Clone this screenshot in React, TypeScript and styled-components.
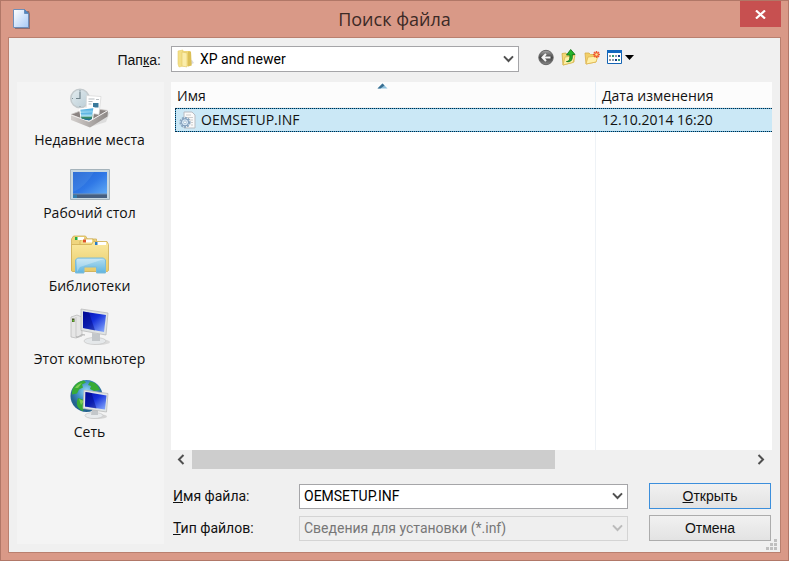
import React from "react";
import styled, { createGlobalStyle, css } from "styled-components";

const uiFont = `"Open Sans", "Noto Sans", sans-serif`;
const dialogFont = `"Liberation Sans", Arial, sans-serif`;
const fieldFont = `Roboto, "Liberation Sans", sans-serif`;

const GlobalStyle = createGlobalStyle`
  *, *::before, *::after { box-sizing: border-box; }
  body { margin: 0; background: #d99987; }
  button, input, select { font: inherit; color: inherit; margin: 0; }
`;

const Window = styled.main`
  min-height: 100vh;
  display: flex;
  flex-direction: column;
  padding: 0 7px 7px;
  border: 1px solid #b17767;
  background: #d99987;
  color: #111;
  font: 14px/20px ${uiFont};
`;

const TitleBar = styled.header`
  display: grid;
  grid-template-columns: 48px 1fr 48px;
  align-items: start;
  height: 36px;
`;

const TitleIcon = styled.svg`
  width: 20px;
  height: 22px;
  margin: 7px 0 0 4px;
`;

const Title = styled.h1`
  margin: 0;
  font-size: 18px;
  font-weight: 400;
  line-height: 36px;
  text-align: center;
  color: #3c2a26;
`;

const CloseButton = styled.button`
  justify-self: end;
  display: flex;
  align-items: center;
  justify-content: center;
  width: 41px;
  height: 26px;
  padding: 0;
  border: 0;
  background: #c75050;
`;

const Client = styled.form`
  flex: 1;
  display: grid;
  grid-template-columns: 147px minmax(0, 1fr);
  grid-template-rows: 44px 1fr;
  column-gap: 7px;
  padding: 0 8px 8px;
  border: 1px solid #b9806f;
  background: #f0f0f0;
`;

const FolderLabel = styled.label`
  justify-self: end;
  padding: 12px 3px 0 0;
  font-family: ${dialogFont};
`;

const FolderBar = styled.div`
  display: flex;
  align-items: center;
  padding-bottom: 2px;
`;

const Combo = styled.div<{ $folder?: boolean; $disabled?: boolean }>`
  position: relative;
  display: flex;
  align-items: center;
  height: 26px;
  border: 1px solid ${(p) => (p.$disabled ? "#d4d4d4" : "#a5a5a8")};
  background: ${(p) => (p.$disabled ? "#efefef" : "#fff")};
  color: ${(p) => (p.$disabled ? "#777" : "#000")};
  font-family: ${fieldFont};
  ${(p) =>
    p.$folder &&
    css`
      flex: 0 1 348px;
      padding-left: 4px;
    `}
`;

const field = css`
  flex: 1;
  min-width: 0;
  align-self: stretch;
  padding: 0 24px 0 4px;
  border: 0;
  outline: 0;
  background: transparent;
  opacity: 1;
`;

const Select = styled.select`
  ${field}
  appearance: none;
  color: inherit;
`;

const TextInput = styled.input`
  ${field}
`;

const ComboArrow = styled.span<{ $disabled?: boolean }>`
  position: absolute;
  right: 4px;
  top: 0;
  bottom: 0;
  display: flex;
  align-items: center;
  pointer-events: none;
  color: ${(p) => (p.$disabled ? "#bbb" : "#505050")};
`;

const Tools = styled.div`
  display: flex;
  align-items: center;
  gap: 3px;
  margin: 0 0 4px 17px;
`;

const ToolButton = styled.button<{ $wide?: boolean }>`
  flex: none;
  width: ${(p) => (p.$wide ? 32 : 20)}px;
  height: 20px;
  padding: 0;
  border: 0;
  background: transparent;
  svg { display: block; }
`;

const Places = styled.nav`
  display: flex;
  flex-direction: column;
  padding: 4px 2px 0 0;
  background: #f4f4f4;
`;

const Place = styled.button`
  display: flex;
  flex-direction: column;
  align-items: center;
  height: 73px;
  padding: 0;
  border: 0;
  background: transparent;
  white-space: nowrap;
  svg { flex: none; }
`;

const Content = styled.section`
  display: flex;
  flex-direction: column;
  min-width: 0;
`;

const FileList = styled.div`
  flex: 1;
  display: flex;
  padding-left: 4px;
  background: linear-gradient(#fcfcfc 25px, #fff 25px);
`;

const Table = styled.table`
  width: 100%;
  border-spacing: 0;
  table-layout: fixed;
`;

const HeadCell = styled.th<{ $date?: boolean }>`
  position: relative;
  width: ${(p) => (p.$date ? "177px" : "auto")};
  height: 26px;
  padding: 2px 0 0 ${(p) => (p.$date ? 6 : 2)}px;
  border-left: ${(p) => (p.$date ? "1px solid #e3edf5" : "0")};
  border-bottom: 1px solid #f2f2f2;
  background: #fcfcfc;
  font-weight: 400;
  text-align: left;
`;

const SortMark = styled.svg`
  position: absolute;
  top: 1px;
  left: calc(50% - 8px);
`;

const Cell = styled.td<{ $first?: boolean }>`
  height: 24px;
  padding: 0 0 0 ${(p) => (p.$first ? 3 : 7)}px;
  border: 1px dotted #062a44;
  border-width: 1px 0 1px ${(p) => (p.$first ? "1px" : "0")};
  background:
    linear-gradient(#cbe8f6, #cbe8f6) padding-box,
    linear-gradient(#4fa9d6, #4fa9d6) border-box;
`;

const FileName = styled.div`
  display: flex;
  align-items: center;
  gap: 5px;
`;

const RestCell = styled.td<{ $date?: boolean }>`
  padding: 0;
  border-left: ${(p) => (p.$date ? "1px solid #eef2f6" : "0")};
`;

const ScrollBar = styled.div`
  display: grid;
  grid-template-columns: 21px minmax(0, 1fr) 21px;
  height: 19px;
`;

const ScrollButton = styled.button`
  display: flex;
  align-items: center;
  justify-content: center;
  padding: 0 2px 0 0;
  border: 0;
  background: transparent;
`;

const ScrollThumb = styled.div`
  width: 65%;
  background: #cdcdcd;
`;

const Fields = styled.div`
  display: grid;
  grid-template-columns: 128px minmax(0, 1fr) 122px;
  column-gap: 0;
  row-gap: 6px;
  align-items: center;
  padding: 14px 1px 3px 0;
  font-family: ${dialogFont};
  label { padding-left: 2px; font-family: ${fieldFont}; }
  ${Combo} { margin-right: 21px; height: 25px; }
`;

const PushButton = styled.button<{ $default?: boolean }>`
  height: 26px;
  padding: 0;
  border: 1px solid ${(p) => (p.$default ? "#3c8fdc" : "#acacac")};
  background: linear-gradient(#f1f1f1, #e3e3e3);
`;

const Grip = styled.svg`
  position: fixed;
  right: 12px;
  bottom: 11px;
`;

const Chevron = () => (
  <svg width="11" height="8" viewBox="0 0 11 8" aria-hidden="true">
    <path d="M1 1.4 5.5 6 10 1.4" fill="none" stroke="currentColor" strokeWidth="2" />
  </svg>
);

const FolderIcon = () => (
  <svg width="20" height="20" viewBox="0 0 20 20" aria-hidden="true">
    <path d="M11 17l7-3-2-3-4 1z" fill="#999" opacity=".35" />
    <path d="M2 2l5-1v16l-4 1-1-3z" fill="#f3df87" stroke="#e6cc68" strokeWidth=".6" />
    <path d="M7 2h7v15l-7 .5z" fill="#efd778" />
    <path d="M6 3l5 1v14l-5-1z" fill="#fbedaa" stroke="#dcc05c" strokeWidth=".5" />
    <path d="M12 2.5h3l.7 14-3.7 1z" fill="#dcc057" />
  </svg>
);

const InfIcon = () => (
  <svg width="17" height="18" viewBox="0 0 17 18" aria-hidden="true">
    <path d="M5 1h8l3 3v13H5z" fill="#fafafa" stroke="#b8bcc2" />
    <path d="M7 4h5M7 6.5h7M10 9h4M12 11.5h2M12 14h2" stroke="#ccc" />
    <circle cx="6" cy="11.3" r="4.6" fill="#dceaf5" stroke="#8ba7c1" strokeWidth="2" strokeDasharray="2 1" />
    <circle cx="6" cy="11.3" r="3.6" fill="#d7e8f5" stroke="#7896b5" />
    <circle cx="6" cy="11.3" r="1.4" fill="#fff" stroke="#8ba7c1" strokeWidth=".6" />
  </svg>
);

const BackIcon = () => (
  <svg width="20" height="20" viewBox="0 0 20 20" aria-hidden="true">
    <defs>
      <linearGradient id="back" x2="0" y2="1"><stop stopColor="#aaa" /><stop offset=".5" stopColor="#444" /><stop offset="1" stopColor="#888" /></linearGradient>
    </defs>
    <circle cx="10" cy="10.5" r="7.2" fill="url(#back)" stroke="#666" />
    <path d="M14.5 10.5H6.5M10 7l-3.5 3.5L10 14" fill="none" stroke="#f5f5f5" strokeWidth="2" />
  </svg>
);

const UpIcon = () => (
  <svg width="20" height="20" viewBox="0 0 20 20" aria-hidden="true">
    <path d="M3 6.5l4-.5 1 1.5h7V15L4 18z" fill="#f3d774" stroke="#d1ac45" strokeWidth=".8" />
    <path d="M4 18l2-8 10-1.5-2 7z" fill="#fdf0a8" stroke="#d9b94f" strokeWidth=".8" />
    <path d="M7.5 14.5c3-.3 3.5-2 3.4-6.500H7.500L11.700 2.500 16 7.500h-2.700c.3 5-.8 8-5.800 7z" fill="#25b52b" stroke="#14751b" strokeWidth=".9" />
  </svg>
);

const NewFolderIcon = () => (
  <svg width="20" height="20" viewBox="0 0 20 20" aria-hidden="true">
    <path d="M3 6h4l1.500 1.500H14V15L4 17z" fill="#f2cf69" stroke="#d8ad49" strokeWidth=".8" />
    <path d="M4 17l2-7 10-1-2 6z" fill="#fff0a9" stroke="#dfb650" strokeWidth=".8" />
    <path d="M14.500 4v7M11 7.500h7M12 5l5 5M17 5l-5 5" stroke="#ef5a31" strokeWidth="1.500" />
    <circle cx="14.500" cy="7.500" r="1.200" fill="#ffe58c" />
  </svg>
);

const ViewIcon = () => (
  <svg width="32" height="20" viewBox="0 0 32 20" aria-hidden="true">
    <path d="M2.500 3.500h14v13h-14z" fill="#fff" stroke="#1464b4" />
    <path d="M2 3h15v3H2z" fill="#1268bf" />
    <path d="M4 8h2v2H4zM4 12h2v2H4z" fill="#9a9a9a" />
    <path d="M7 8h2v2H7zM13 12h2v2h-2z" fill="#359d77" />
    <path d="M13 8h2v2h-2zM10 12h2v2h-2z" fill="#173d8c" />
    <path d="M10 8h2v2h-2zM7 12h2v2H7z" fill="#8a9cae" />
    <path d="M20 8h9l-4.500 5z" fill="#000" />
  </svg>
);

const RecentIcon = () => (
  <svg width="40" height="44" viewBox="0 0 40 44" aria-hidden="true">
    <defs>
      <linearGradient id="clock" x2="1" y2="1"><stop stopColor="#e4edf0" /><stop offset="1" stopColor="#b9ccd5" /></linearGradient>
      <linearGradient id="photo" x2="0" y2="1"><stop stopColor="#3fa5dc" /><stop offset=".45" stopColor="#b5e4f5" /><stop offset=".6" stopColor="#3d8f62" /><stop offset="1" stopColor="#1566a6" /></linearGradient>
      <linearGradient id="tray" x2="1"><stop stopColor="#d4d0ce" /><stop offset="1" stopColor="#8d8886" /></linearGradient>
    </defs>
    <path d="M20 41l16-5 4-10-6 2z" fill="#aaa" opacity=".3" />
    <circle cx="10" cy="12.500" r="9.200" fill="url(#clock)" stroke="#c3cacd" strokeWidth="1.500" />
    <path d="M10 5.500v7h-4" fill="none" stroke="#71848c" strokeWidth="1.200" />
    <path d="M10 4v1M10 20v1M2 12.500h1M17 12.500h1" stroke="#81939a" />
    <path d="M1 28.500l17-6.500 20 2.500L19 36z" fill="#8a8381" stroke="#c5c1bf" strokeWidth=".8" />
    <path d="M16.500 9.500l14.500 1-2 18-13-2z" fill="#fff" stroke="#d5d5d5" strokeWidth=".7" />
    <path d="M18.500 13h6M18.500 15.500h4M18.500 18h3M26 13.500h3" stroke="#b7bdc1" />
    <path d="M23 17h5.500v4.500H23z" fill="#39799b" />
    <path d="M9 22.500l15.500-1.500-1.500 13.500-12 1z" fill="#fff" />
    <path d="M10.300 23.800l13-1.500-1.400 11-10 1.200z" fill="url(#photo)" />
    <path d="M1 29l18 6.500L38 24.500l-.5 6L20 41.500 1 34z" fill="url(#tray)" />
    <path d="M1 29l18 6.500L38 24.500" fill="none" stroke="#f0eeed" />
    <path d="M10.700 27l11.700-.5-.8 6.500-2.600 1.500-7.500-2z" fill="url(#photo)" />
  </svg>
);

const DesktopIcon = () => (
  <svg width="40" height="44" viewBox="0 0 40 44" aria-hidden="true">
    <defs><linearGradient id="desk" x2="1" y2="1"><stop stopColor="#2060d0" /><stop offset=".5" stopColor="#2f78e6" /><stop offset="1" stopColor="#67b1f7" /></linearGradient></defs>
    <path d="M.5 10.500h39v30H.5z" fill="#c7d8e1" stroke="#a5b3bb" />
    <path d="M3 13h34v25H3z" fill="url(#desk)" />
    <path d="M3 13h21C19 21 13 29 3 33z" fill="#6ba9ed" opacity=".22" />
    <path d="M3 35h34v4H3z" fill="#455f80" />
    <path d="M3 35h34" stroke="#7492b3" />
    <path d="M3 36h4v3H3z" fill="#2f7cae" />
  </svg>
);

const LibrariesIcon = () => (
  <svg width="40" height="44" viewBox="0 0 40 44" aria-hidden="true">
    <defs>
      <linearGradient id="lib" x2="0" y2="1"><stop stopColor="#fbe9a0" /><stop offset="1" stopColor="#e8cb69" /></linearGradient>
      <linearGradient id="stand" x2="0" y2="1"><stop stopColor="#b4def0" /><stop offset="1" stopColor="#5fb4df" /></linearGradient>
    </defs>
    <g stroke="#cfae55" strokeWidth=".8">
      <path d="M1.500 7l2-3h12l2 3h9v32H1.500z" fill="#efd57e" />
      <path d="M10 9.500L12 7h11l2 3h8v29H10z" fill="#f3dc85" />
      <path d="M1.500 12.500h20l2-3h13.500l1.500 3v26l-1 1H2.500l-1-1z" fill="url(#lib)" />
    </g>
    <path d="M5 5h9v3H5zM13 7.500h9v3h-9zM25 10h11v3H25z" fill="#fff" />
    <path d="M5 5h2.500v3H5z" fill="#22ad46" /><path d="M13 7.500h3v3h-3z" fill="#df5329" /><path d="M25 10h2.500v3H25z" fill="#2879c3" />
    <path d="M5.500 28l2-2h26l2 2v13h-9v-6H14v6H5.500z" fill="url(#stand)" stroke="#7cbcda" />
    <path d="M7 27h27L10 35l-3 5z" fill="#fff" opacity=".3" />
  </svg>
);

const ScreenDefs = () => (
  <defs>
    <linearGradient id="screen" x2="1" y2="1"><stop stopColor="#0008a8" /><stop offset=".45" stopColor="#1530da" /><stop offset="1" stopColor="#8fb2ff" /></linearGradient>
  </defs>
);

const ComputerIcon = () => (
  <svg width="40" height="44" viewBox="0 0 40 44" aria-hidden="true">
    <ScreenDefs />
    <path d="M1 12l6-2 5 2v19l-6 2-5-1z" fill="#e6e6e6" stroke="#b5b5b5" strokeWidth=".7" />
    <path d="M6 12v20" stroke="#bbb" strokeWidth=".7" />
    <path d="M2 13.500h2.500V17H2z" fill="#48572b" />
    <path d="M2.500 15h1.500v1.500H2.500z" fill="#68c531" />
    <path d="M6 32c5 0 3-3 9-2" fill="none" stroke="#aaa" />
    <ellipse cx="29" cy="37" rx="11" ry="3" fill="#aaa" opacity=".35" />
    <ellipse cx="25" cy="36" rx="11" ry="3.500" fill="#e5e8ea" stroke="#c5c5c5" strokeWidth=".7" />
    <path d="M22 28l8 1 0 7h-8z" fill="#c3c7ca" />
    <path d="M11 4l27 4-2 22-25-4.500z" fill="#dfe3e4" stroke="#b5b5b5" strokeWidth=".7" />
    <path d="M13 6.500l23 3.500-2 17-21-4z" fill="url(#screen)" />
    <path d="M13 6.500l6 1 6 18-12-2.500z" fill="#00067b" opacity=".45" />
  </svg>
);

const NetworkIcon = () => (
  <svg width="40" height="44" viewBox="0 0 40 44" aria-hidden="true">
    <ScreenDefs />
    <defs><radialGradient id="globe" cx=".5" cy=".35"><stop stopColor="#9adcfb" /><stop offset=".55" stopColor="#4292c8" /><stop offset="1" stopColor="#246490" /></radialGradient></defs>
    <circle cx="16.500" cy="18" r="16" fill="url(#globe)" />
    <path d="M3 10C6 5 10 3 14 2.500l2 2-4 2 1 3-4 2-2 4-5 1c0-2 0-4 1-6.500zM20 3.500l5 1.500 3 3 2 4-6 1-4-2 1-3-3-1zM8 20l6 2 3 4-3 3-1 4C8 31 5 27 8 20z" fill="#38ab36" />
    <path d="M5 10c2-3 4-4 7-5l-4 5zM9 21l5 2-3 4z" fill="#92d75f" opacity=".75" />
    <ellipse cx="27" cy="38.500" rx="10" ry="2.500" fill="#999" opacity=".35" />
    <ellipse cx="24" cy="37.500" rx="9" ry="3" fill="#e8ebed" stroke="#c5c5c5" strokeWidth=".7" />
    <path d="M22 32h6v5h-7z" fill="#c3c7ca" />
    <path d="M14 12l24 3.500-1.500 18.500L13 30.500z" fill="#e0e5e6" stroke="#b5b5b5" strokeWidth=".7" />
    <path d="M15.500 14l21 3.500-1.500 14-20-3z" fill="url(#screen)" />
    <path d="M15.500 14l6 1 5 15.500-11.500-2z" fill="#00067b" opacity=".45" />
  </svg>
);

const places = [
  { name: "Недавние места", icon: RecentIcon },
  { name: "Рабочий стол", icon: DesktopIcon },
  { name: "Библиотеки", icon: LibrariesIcon },
  { name: "Этот компьютер", icon: ComputerIcon },
  { name: "Сеть", icon: NetworkIcon },
];

const tools = [
  { name: "Назад", icon: BackIcon },
  { name: "Вверх", icon: UpIcon },
  { name: "Новая папка", icon: NewFolderIcon },
  { name: "Вид", icon: ViewIcon, wide: true },
];

export default function App() {
  return (
    <Window>
      <GlobalStyle />
      <TitleBar>
        <TitleIcon viewBox="0 0 20 22" aria-hidden="true">
          <defs><linearGradient id="doc" x2="1" y2="1"><stop stopColor="#fff" /><stop offset="1" stopColor="#a8caf6" /></linearGradient></defs>
          <path d="M4 3h13l1 3v15H3z" fill="#6f5b65" opacity=".7" />
          <path d="M1.500 1.500h11l4 4v14h-15z" fill="url(#doc)" stroke="#6e8eb9" />
          <path d="M12.500 1.500v4h4z" fill="#4d86c5" stroke="#547ba9" strokeWidth=".7" />
        </TitleIcon>
        <Title>Поиск файла</Title>
        <CloseButton type="button" aria-label="Закрыть">
          <svg width="11" height="9" viewBox="0 0 11 9" aria-hidden="true">
            <path d="M1 .5l9 8M10 .5l-9 8" stroke="#fff" strokeWidth="2.200" />
          </svg>
        </CloseButton>
      </TitleBar>
      <Client onSubmit={(e) => e.preventDefault()}>
        <FolderLabel htmlFor="folder">Пап<u>к</u>а:</FolderLabel>
        <FolderBar>
          <Combo $folder>
            <FolderIcon />
            <Select id="folder"><option>XP and newer</option></Select>
            <ComboArrow><Chevron /></ComboArrow>
          </Combo>
          <Tools>
            {tools.map(({ name, icon: Icon, wide }) => (
              <ToolButton key={name} type="button" aria-label={name} $wide={wide}><Icon /></ToolButton>
            ))}
          </Tools>
        </FolderBar>
        <Places>
          {places.map(({ name, icon: Icon }) => (
            <Place key={name} type="button"><Icon /><span>{name}</span></Place>
          ))}
        </Places>
        <Content>
          <FileList>
            <Table>
              <thead>
                <tr>
                  <HeadCell>
                    Имя
                    <SortMark width="11" height="6" viewBox="0 0 11 6" aria-hidden="true">
                      <path d="M.5 5.500l5-5 5 5z" fill="#8fc1dd" />
                      <path d="M.5 5.500l5-5 2 2-4 3z" fill="#396e90" />
                    </SortMark>
                  </HeadCell>
                  <HeadCell $date>Дата изменения</HeadCell>
                </tr>
              </thead>
              <tbody>
                <tr>
                  <Cell $first><FileName><InfIcon />OEMSETUP.INF</FileName></Cell>
                  <Cell>12.10.2014 16:20</Cell>
                </tr>
                <tr><RestCell /><RestCell $date /></tr>
              </tbody>
            </Table>
          </FileList>
          <ScrollBar>
            <ScrollButton type="button" aria-label="Прокрутить влево">
              <svg width="8" height="11" viewBox="0 0 8 11" aria-hidden="true"><path d="M6.500 1L2 5.500 6.500 10" fill="none" stroke="#505050" strokeWidth="2" /></svg>
            </ScrollButton>
            <ScrollThumb />
            <ScrollButton type="button" aria-label="Прокрутить вправо">
              <svg width="8" height="11" viewBox="0 0 8 11" aria-hidden="true"><path d="M1.500 1L6 5.500 1.500 10" fill="none" stroke="#505050" strokeWidth="2" /></svg>
            </ScrollButton>
          </ScrollBar>
          <Fields>
            <label htmlFor="filename"><u>И</u>мя файла:</label>
            <Combo>
              <TextInput id="filename" defaultValue="OEMSETUP.INF" />
              <ComboArrow><Chevron /></ComboArrow>
            </Combo>
            <PushButton $default type="submit"><u>О</u>ткрыть</PushButton>
            <label htmlFor="filetype"><u>Т</u>ип файлов:</label>
            <Combo $disabled>
              <Select id="filetype" disabled><option>Сведения для установки (*.inf)</option></Select>
              <ComboArrow $disabled><Chevron /></ComboArrow>
            </Combo>
            <PushButton type="button">Отмена</PushButton>
          </Fields>
        </Content>
      </Client>
      <Grip width="11" height="11" viewBox="0 0 11 11" aria-hidden="true">
        <path d="M8 0h3v3H8zM4 4h3v3H4zM8 4h3v3H8zM0 8h3v3H0zM4 8h3v3H4zM8 8h3v3H8z" fill="#bfbfbf" />
      </Grip>
    </Window>
  );
}
